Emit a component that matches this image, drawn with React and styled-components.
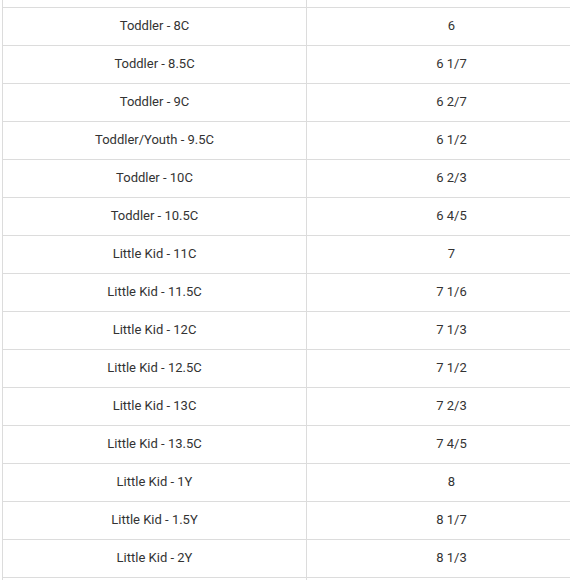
import React from 'react'
import styled, { createGlobalStyle } from 'styled-components'

const GlobalStyle = createGlobalStyle`
  html, body {
    margin: 0;
    padding: 0;
    background: #fff;
    overflow: hidden;
  }
`

const Wrapper = styled.div`
  width: 570px;
  height: 580px;
  overflow: hidden;
  padding-left: 2px;
  font-family: Roboto, "Liberation Sans", sans-serif;
`

const Table = styled.table`
  border-collapse: collapse;
  margin-top: -31px;
  width: 592px;
  table-layout: fixed;
`

const Cell = styled.td`
  width: ${p => p.$w}px;
  height: 35px;
  padding: 0 0 2px;
  border: 1px solid #dcdcdc;
  text-align: center;
  vertical-align: middle;
  font-size: 13px;
  color: #333;
`

const rows = [
  ['', ''],
  ['Toddler - 8C', '6'],
  ['Toddler - 8.5C', '6 1/7'],
  ['Toddler - 9C', '6 2/7'],
  ['Toddler/Youth - 9.5C', '6 1/2'],
  ['Toddler - 10C', '6 2/3'],
  ['Toddler - 10.5C', '6 4/5'],
  ['Little Kid - 11C', '7'],
  ['Little Kid - 11.5C', '7 1/6'],
  ['Little Kid - 12C', '7 1/3'],
  ['Little Kid - 12.5C', '7 1/2'],
  ['Little Kid - 13C', '7 2/3'],
  ['Little Kid - 13.5C', '7 4/5'],
  ['Little Kid - 1Y', '8'],
  ['Little Kid - 1.5Y', '8 1/7'],
  ['Little Kid - 2Y', '8 1/3'],
  ['', ''],
]

export default function App() {
  return (
    <>
      <GlobalStyle />
      <Wrapper>
        <Table>
          <tbody>
            {rows.map(([size, value], i) => (
              <tr key={i}>
                <Cell $w={303}>{size}</Cell>
                <Cell $w={289}>{value}</Cell>
              </tr>
            ))}
          </tbody>
        </Table>
      </Wrapper>
    </>
  )
}
